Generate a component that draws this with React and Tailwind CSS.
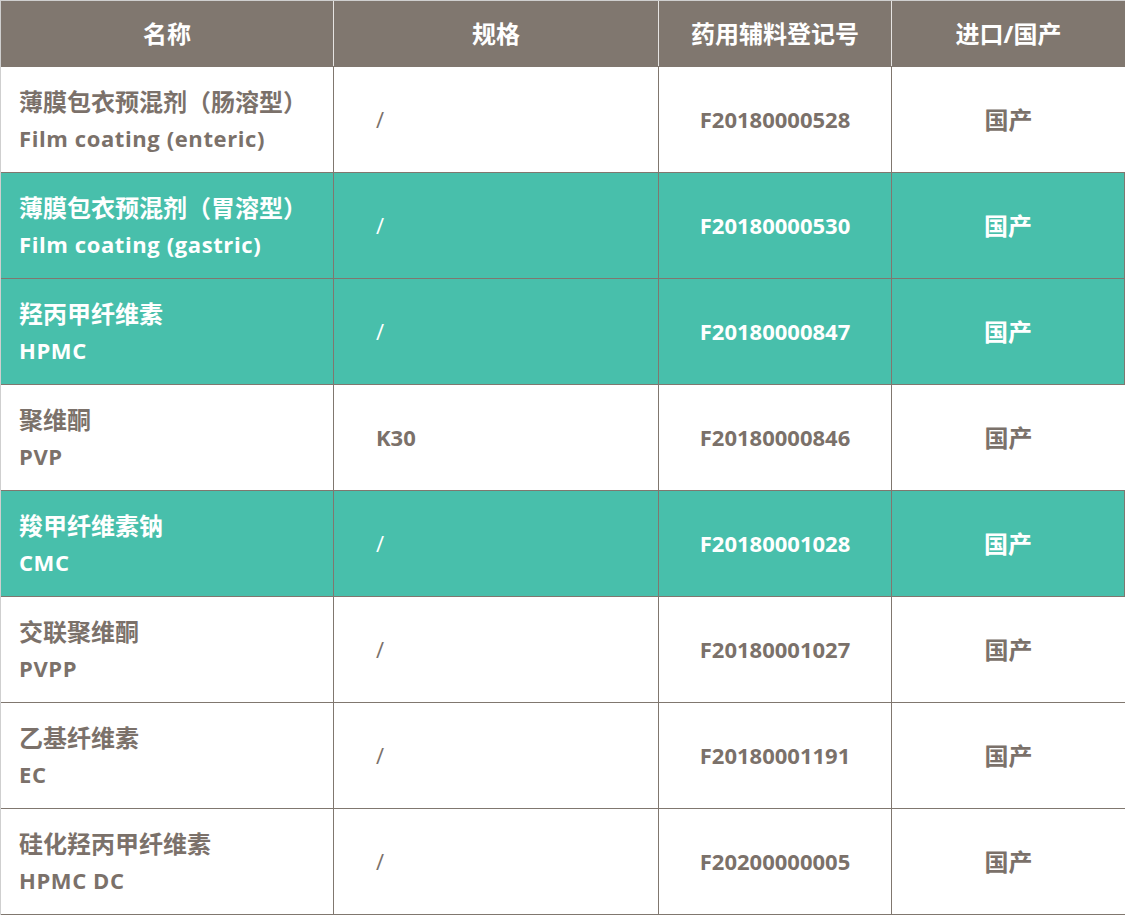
const rows = [
  { cn: "薄膜包衣预混剂（肠溶型）", en: "Film coating (enteric)", spec: "/", code: "F20180000528", origin: "国产", hl: false },
  { cn: "薄膜包衣预混剂（胃溶型）", en: "Film coating (gastric)", spec: "/", code: "F20180000530", origin: "国产", hl: true },
  { cn: "羟丙甲纤维素", en: "HPMC", spec: "/", code: "F20180000847", origin: "国产", hl: true },
  { cn: "聚维酮", en: "PVP", spec: "K30", code: "F20180000846", origin: "国产", hl: false },
  { cn: "羧甲纤维素钠", en: "CMC", spec: "/", code: "F20180001028", origin: "国产", hl: true },
  { cn: "交联聚维酮", en: "PVPP", spec: "/", code: "F20180001027", origin: "国产", hl: false },
  { cn: "乙基纤维素", en: "EC", spec: "/", code: "F20180001191", origin: "国产", hl: false },
  { cn: "硅化羟丙甲纤维素", en: "HPMC DC", spec: "/", code: "F20200000005", origin: "国产", hl: false },
];

const cols = "grid grid-cols-[333px_325px_233px_1fr]";

export default function App() {
  return (
    <div className="w-[1125px] bg-white font-['Open_Sans','Noto_Sans_CJK_SC',sans-serif] font-bold text-[22px]">
      <div className="border-t border-l border-[#cfcfcf]">
        <div className={`${cols} h-[66px] bg-[#80776f] text-white text-[24px] border-b border-[#80776f]`}>
          {["名称", "规格", "药用辅料登记号", "进口/国产"].map((h, i) => (
            <div
              key={h}
              className={`flex items-center justify-center ${i < 3 ? "border-r border-white/80" : ""}`}
            >
              {h}
            </div>
          ))}
        </div>
        {rows.map((r) => (
          <div
            key={r.code}
            className={`${cols} h-[106px] border-b border-[#80776f] ${
              r.hl ? "bg-[#48bfab] text-white" : "bg-white text-[#7b716a]"
            }`}
          >
            <div className="flex flex-col justify-center pl-[18px] leading-[36px] border-r border-[#80776f]">
              <span className="text-[24px]">{r.cn}</span>
              <span className="tracking-[0.6px]">{r.en}</span>
            </div>
            <div
              className={`flex items-center pl-[42px] border-r border-[#80776f] ${
                r.spec === "/" ? "font-normal" : ""
              }`}
            >
              {r.spec}
            </div>
            <div className="flex items-center justify-center border-r border-[#80776f]">{r.code}</div>
            <div
              className={`flex items-center justify-center text-[24px] ${
                r.hl ? "border-r border-[#80776f]" : ""
              }`}
            >
              {r.origin}
            </div>
          </div>
        ))}
      </div>
    </div>
  );
}
